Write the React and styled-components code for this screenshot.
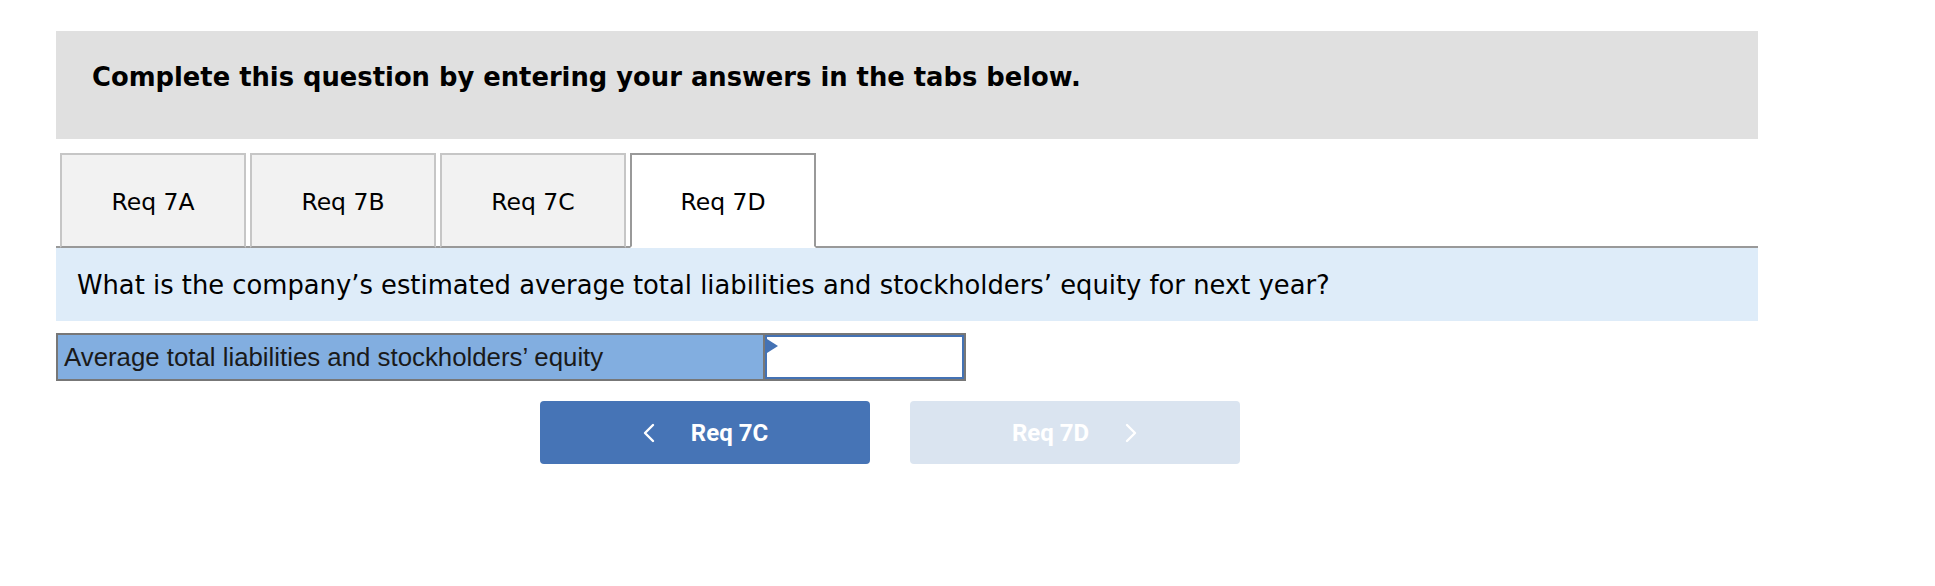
import styled, { createGlobalStyle } from "styled-components"

const GlobalStyle = createGlobalStyle`
  body {
    margin: 0;
    background: #ffffff;
    font-family: "DejaVu Sans", Verdana, sans-serif;
    color: #000000;
  }
`

const Page = styled.div`
  width: 1702px;
  padding: 31px 0 0 56px;
`

const Instructions = styled.div`
  height: 108px;
  box-sizing: border-box;
  padding: 30px 36px 0;
  background: #e0e0e0;
  font-size: 25.8px;
  line-height: 32px;
  font-weight: 700;
`

const TabBar = styled.div`
  display: flex;
  gap: 4px;
  margin-top: 14px;
  padding-left: 4px;
  border-bottom: 2px solid #999999;
`

const Tab = styled.div`
  width: 186px;
  height: 95px;
  box-sizing: border-box;
  margin-bottom: -2px;
  padding-top: 2px;
  display: flex;
  align-items: center;
  justify-content: center;
  font-size: 23.5px;
  background: ${(p) => (p.$active ? "#ffffff" : "#f2f2f2")};
  background-clip: padding-box;
  border: 2px solid ${(p) => (p.$active ? "#999999" : "#c6c6c6")};
  border-bottom: 2px solid ${(p) => (p.$active ? "#ffffff" : "transparent")};
`

const Question = styled.div`
  height: 73px;
  box-sizing: border-box;
  padding: 0 21px;
  display: flex;
  align-items: center;
  background: #deecf9;
  font-size: 25.8px;
`

const AnswerRow = styled.div`
  display: flex;
  width: 910px;
  height: 48px;
  box-sizing: border-box;
  margin-top: 12px;
  border: 2px solid #777777;
`

const AnswerLabel = styled.div`
  width: 707px;
  display: flex;
  align-items: center;
  padding-left: 6px;
  box-sizing: border-box;
  background: #82aee0;
  border-right: 2px solid #777777;
  font-family: "Liberation Sans", Arial, sans-serif;
  font-size: 25.8px;
  color: #1a1a1a;
`

const AnswerCell = styled.div`
  position: relative;
  flex: 1;
  border: 2px solid #4472b4;
  background: #ffffff;
`

const CornerMark = styled.span`
  position: absolute;
  left: 0;
  top: 2px;
  width: 0;
  height: 0;
  border-top: 7px solid transparent;
  border-bottom: 7px solid transparent;
  border-left: 11px solid #4472b4;
`

const NavRow = styled.div`
  display: flex;
  gap: 40px;
  margin-top: 20px;
  padding-left: 484px;
`

const NavButton = styled.button`
  width: 330px;
  height: 63px;
  border: none;
  border-radius: 4px;
  display: flex;
  align-items: center;
  justify-content: center;
  gap: 35px;
  background: ${(p) => (p.disabled ? "#dae4f0" : "#4674b6")};
  color: #ffffff;
  font-family: Roboto, "Liberation Sans", sans-serif;
  font-weight: 700;
  font-size: 24px;
  cursor: ${(p) => (p.disabled ? "default" : "pointer")};
`

const Chevron = ({ dir }) => (
  <svg width="14" height="20" viewBox="0 0 14 20" fill="none">
    <polyline
      points={dir === "left" ? "11,2 3,10 11,18" : "3,2 11,10 3,18"}
      stroke="#ffffff"
      strokeWidth="2.4"
      strokeLinecap="round"
      strokeLinejoin="round"
    />
  </svg>
)

const tabs = ["Req 7A", "Req 7B", "Req 7C", "Req 7D"]

const App = () => {
  return (
    <Page>
      <GlobalStyle />
      <Instructions>Complete this question by entering your answers in the tabs below.</Instructions>
      <TabBar>
        {tabs.map((t) => (
          <Tab key={t} $active={t === "Req 7D"}>{t}</Tab>
        ))}
      </TabBar>
      <Question>What is the company’s estimated average total liabilities and stockholders’ equity for next year?</Question>
      <AnswerRow>
        <AnswerLabel>Average total liabilities and stockholders’ equity</AnswerLabel>
        <AnswerCell>
          <CornerMark />
        </AnswerCell>
      </AnswerRow>
      <NavRow>
        <NavButton>
          <Chevron dir="left" />
          <span>Req 7C</span>
        </NavButton>
        <NavButton disabled>
          <span>Req 7D</span>
          <Chevron dir="right" />
        </NavButton>
      </NavRow>
    </Page>
  )
}

export default App
